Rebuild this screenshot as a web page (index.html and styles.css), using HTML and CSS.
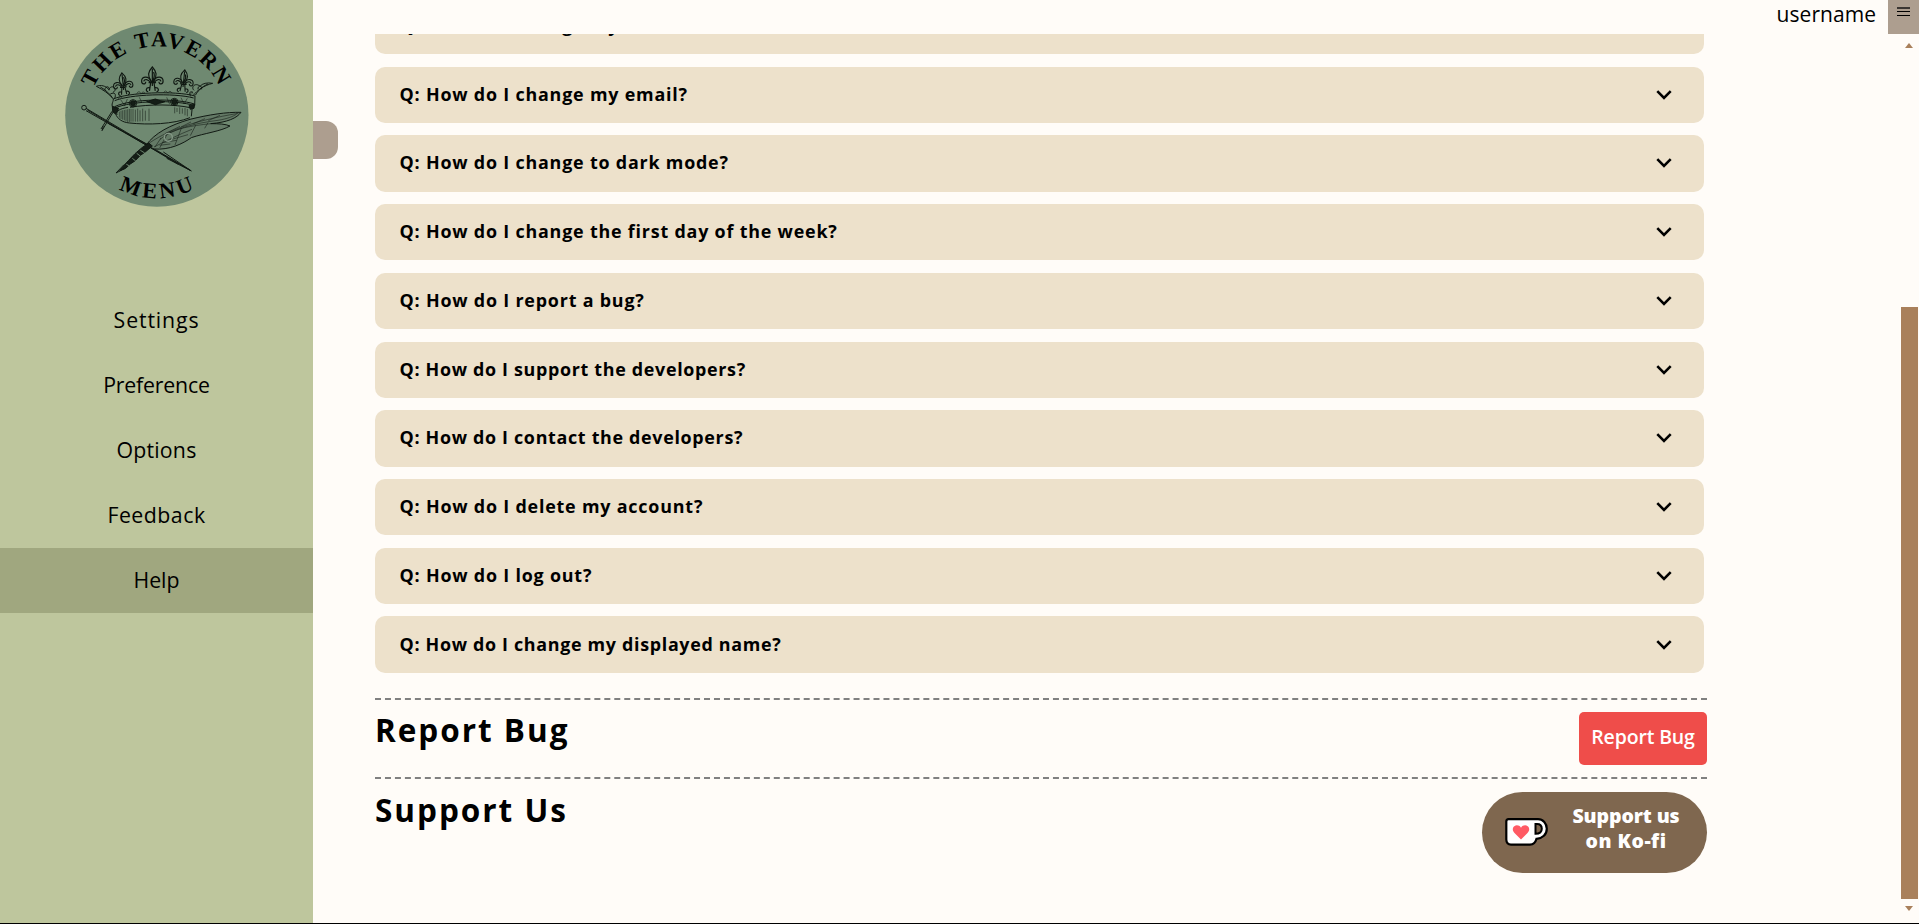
FILE: index.html
```html
<!DOCTYPE html>
<html lang="en">
<head>
<meta charset="utf-8">
<title>The Tavern Menu - Help</title>
<link rel="stylesheet" href="styles.css">
</head>
<body>
<svg width="0" height="0" class="defs">
  <defs>
    <symbol id="chevron" viewBox="0 0 16 10"><path d="M1.300 1.200 8 7.900l6.700-6.700" fill="none" stroke="#000" stroke-width="2.600"/></symbol>
    <g id="fleur">
      <path d="M0 -46C-11 -34 -12 -25 -3 -11H3C12 -25 11 -34 0 -46Z"/>
      <path d="M0 -42V0M3 -34C6 -27 5 -20 1 -13" />
      <path d="M-3 -11C-8 -25 -26 -25 -26 -12C-26 -3 -16 -3 -16 -10M-5 -9C-10 -17 -19 -18 -21 -11M3 -11C8 -25 26 -25 26 -12C26 -3 16 -3 16 -10M5 -9C10 -17 19 -18 21 -11"/>
      <path d="M-9 -8H9M-4 -8L-7 12M4 -8L7 12M-7 4C-16 3 -17 13 -10 14M7 4C16 3 17 13 10 14"/>
    </g>
  </defs>
</svg>
<div class="app">
  <aside class="sidebar">
    <svg class="logo" viewBox="45 38 551 553">
      <defs>
        <path id="arc-top" d="M130.400 233.500A206 206 0 0 1 512 240"/>
        <path id="arc-bottom" d="M206 536A249 249 0 0 0 445 530"/>
      </defs>
      <circle cx="320.500" cy="314.500" r="275" fill="#6f8971"/>
      <text class="logo-text"><textPath href="#arc-top" textLength="474" lengthAdjust="spacing">THE TAVERN</textPath></text>
      <text class="logo-text"><textPath href="#arc-bottom" textLength="236" lengthAdjust="spacing">MENU</textPath></text>
      <g class="ink">
        <use href="#fleur" transform="translate(307 227) scale(1.240)"/>
        <use href="#fleur" transform="translate(221 239) rotate(-6) scale(1.120)"/>
        <use href="#fleur" transform="translate(399 230) rotate(6) scale(1.120)"/>
        <path d="M190 266C176 249 160 239 139 228C153 223 167 226 176 238C187 218 205 238 189 246M151 230C169 240 180 252 187 262M164 240C166 224 181 228 177 240M181 251C195 244 199 252 194 264"/>
        <path d="M430 255C442 240 460 226 488 219C472 216 457 219 450 228C437 215 421 230 432 240M474 221C454 230 443 243 436 255M455 237C456 223 443 225 444 237M429 246C418 241 417 250 422 258"/>
        <path d="M190 266C230 247 375 240 435 257L434 286C380 268 245 270 192 294C180 285 190 277 190 266Z"/>
        <path d="M194 271C240 252 370 247 431 263M194 289C245 264 382 264 433 281" stroke-width="3"/>
        <path d="M193 294C188 303 190 309 197 311C202 325 216 336 238 338C295 344 370 342 420 322M201 314C197 302 210 295 234 291M240 291C300 281 376 282 420 292M427 288L424 318"/>
        <path class="fine" d="M208 304v18M213 301v25M218 300v28M223 299v31M228 298v35M233 297v38M238 296v39M243 296v38M249 296v38M256 298v36M263 295v39M270 300v33M278 295v38M286 301v30M297 295v37M374 291v18M381 293v12M389 291v20M397 294v16M405 293v22M412 296v22"/>
        <ellipse class="solid" cx="249" cy="279" rx="7" ry="8"/>
        <ellipse class="solid" cx="373" cy="275" rx="7" ry="8"/>
        <circle cx="249" cy="279" r="11"/><circle cx="373" cy="275" r="11"/>
        <path class="solid" d="M290 274L303 270L316 266L330 271L345 274L329 279L316 283L302 278Z"/>
        <path class="solid" d="M187 288L206 294L198 310L188 304ZM417 286L434 282L432 294L421 297Z"/>
        <path class="fine" d="M212 268L224 286L232 266M268 261L276 278M350 261L359 282M393 262L402 281L412 264"/>
        <path class="fine" d="M204 266q6 -12 12 -3M260 250q7 -12 13 0q7 -10 13 0M340 248q7 -12 13 0q7 -10 13 0M420 253q5 -11 10 -4"/>
      </g>
      <g class="ink">
        <circle cx="102" cy="292" r="7"/>
        <path d="M108 294L421 480L108 301M112 299L385 462M190 304L156 361L160 348M186 303L153 356"/>
        <path d="M174 339L292 402M340 425L424 482L350 444"/>
      </g>
      <g class="ink">
        <path class="feather" d="M288 405C314 368 361 344 420 327C477 313 529 305 573 306C561 323 533 336 482 340C507 340 526 341 540 347C513 363 462 369 424 382C399 400 358 420 312 416Z"/>
        <path class="fine" d="M288 405C350 360 430 332 565 309M330 387C370 354 440 338 504 330C530 326 551 318 560 311M345 375C380 354 420 347 482 340M312 410C350 391 390 371 426 357"/>
        <path class="fine" d="M333 383L315 410M350 374L329 413M394 354L375 404M437 345L421 376M474 337L464 354M390 348L345 370M423 335L393 350M465 325L430 340M510 315L475 331M338 397L380 390M329 405L361 401M359 389L414 373"/>
        <circle cx="355" cy="381" r="12" stroke="#859987" stroke-width="4"/>
        <path class="solid" d="M296 398L276 412L255 430L236 450L223 464L209 481L227 474L241 461L256 451L270 436L287 424L307 407Z"/>
        <path d="M222 463L198 488L226 474"/>
        <path d="M247 444L257 452M260 429L272 438M271 420L284 428M229 462L237 466" stroke="#6f8971"/>
      </g>
    </svg>
    <nav class="nav">
      <a class="nav-item settings">Settings</a>
      <a class="nav-item preference">Preference</a>
      <a class="nav-item options">Options</a>
      <a class="nav-item feedback">Feedback</a>
      <a class="nav-item help active">Help</a>
    </nav>
    <div class="drawer-handle"></div>
  </aside>
  <div class="page">
    <header class="topbar">
      <span class="username">username</span>
      <button class="menu-button" aria-label="Menu">
        <svg width="13" height="10" viewBox="0 0 13 10"><path d="M0 1h13" stroke="#3b3632" stroke-width="2"/><path d="M0 4.500h13M0 8.500h13" stroke="#000" stroke-width="1.200"/></svg>
      </button>
    </header>
    <div class="scroll-area">
      <main class="content">
        <div class="faq">
          <div class="question"><span>Q: How do I change my username?</span><svg class="chevron"><use href="#chevron"/></svg></div>
          <div class="question"><span>Q: How do I change my email?</span><svg class="chevron"><use href="#chevron"/></svg></div>
          <div class="question"><span>Q: How do I change to dark mode?</span><svg class="chevron"><use href="#chevron"/></svg></div>
          <div class="question"><span>Q: How do I change the first day of the week?</span><svg class="chevron"><use href="#chevron"/></svg></div>
          <div class="question"><span>Q: How do I report a bug?</span><svg class="chevron"><use href="#chevron"/></svg></div>
          <div class="question tight"><span>Q: How do I support the developers?</span><svg class="chevron"><use href="#chevron"/></svg></div>
          <div class="question tight"><span>Q: How do I contact the developers?</span><svg class="chevron"><use href="#chevron"/></svg></div>
          <div class="question"><span>Q: How do I delete my account?</span><svg class="chevron"><use href="#chevron"/></svg></div>
          <div class="question"><span>Q: How do I log out?</span><svg class="chevron"><use href="#chevron"/></svg></div>
          <div class="question tight"><span>Q: How do I change my displayed name?</span><svg class="chevron"><use href="#chevron"/></svg></div>
        </div>
        <section class="row report">
          <h2>Report Bug</h2>
          <button class="report-button">Report Bug</button>
        </section>
        <section class="row support">
          <h2>Support Us</h2>
          <a class="kofi">
            <svg class="cup" viewBox="0 0 43 28">
              <path d="M3.500 1.200H33C38 1.200 41.800 5.500 41.800 10.800C41.800 16.500 37.500 20.500 31.500 20.800C30.500 24.500 28.500 26.600 25 26.600H6C3 26.600 1.300 24.500 1.300 21.500V3.500C1.300 2 2 1.200 3.500 1.200Z" fill="#fff" stroke="#000" stroke-width="2.200"/>
              <path d="M30.500 6H32C35 6 36.800 8 36.800 10.800C36.800 14 34.500 15.800 30.500 15.800Z" fill="#7f674f" stroke="#000" stroke-width="2"/>
              <path d="M16 21.500L9.500 15C7 12.500 7.500 9.500 9.300 8.200C11.500 6.600 14.500 7.300 16 9.700C17.500 7.300 20.500 6.600 22.700 8.200C24.500 9.500 25 12.500 22.500 15Z" fill="#ff5a64"/>
            </svg>
            <span class="kofi-label"><span class="kofi-top">Support us</span><br><span class="kofi-bottom">on Ko-fi</span></span>
          </a>
        </section>
      </main>
      <div class="scrollbar">
        <div class="arrow up"></div>
        <div class="track"><div class="thumb"></div></div>
        <div class="arrow down"></div>
      </div>
    </div>
  </div>
</div>
</body>
</html>
```
FILE: styles.css
```css
* { box-sizing: border-box; }
body {
  margin: 0;
  height: 924px;
  overflow: hidden;
  background: #fffcf8;
  color: #000;
  font-family: "Open Sans", sans-serif;
}
.defs { position: absolute; }
button { border: 0; padding: 0; font-family: inherit; }

.app { display: flex; height: 924px; border-bottom: 1px solid #000; }

.sidebar {
  position: relative;
  width: 313px;
  flex: none;
  background: #bec69d;
  padding-top: 22.500px;
}
.logo { display: block; width: 183.700px; height: 184.300px; margin-left: 65px; }
.logo-text { font: bold 66px "Liberation Serif", serif; fill: #000; }
.ink { fill: none; stroke: #0f1711; stroke-width: 2.900; }
.fine { stroke-width: 1.600; }
.solid { fill: #141d16; }
.feather { fill: #647a66; }
.drawer-handle {
  position: absolute;
  left: 313px;
  top: 121px;
  width: 25px;
  height: 38px;
  border-radius: 0 12px 12px 0;
  background: #ad9e8f;
}
.nav { margin-top: 81.200px; display: flex; flex-direction: column; }
.nav-item {
  height: 65px;
  padding-bottom: 2px;
  display: flex;
  align-items: center;
  justify-content: center;
  font-size: 21.300px;
  font-weight: 500;
}
.settings { letter-spacing: .850px; }
.preference { letter-spacing: -.200px; }
.options { letter-spacing: .200px; }
.feedback { letter-spacing: .500px; }
.help { letter-spacing: 0; }
.active { background: #a0a77f; }

.page { flex: 1; display: flex; flex-direction: column; }
.topbar { height: 34px; display: flex; justify-content: flex-end; }
.username { font-size: 21px; font-weight: 500; line-height: 28px; letter-spacing: .050px; margin-right: 12px; }
.menu-button { width: 31px; height: 34px; background: #ad9e8f; display: flex; justify-content: center; padding: 7px 1px 0 0; }

.scroll-area { flex: 1; min-height: 0; display: flex; justify-content: space-between; overflow: hidden; }
.content { width: 1332px; margin-left: 62px; }
.faq {
  display: flex;
  flex-direction: column;
  gap: 12.450px;
  width: 1329px;
  margin-top: -36.150px;
  margin-bottom: 25.100px;
}
.question {
  height: 56.300px;
  padding: 0 32px 2px 24.500px;
  border-radius: 10px;
  background: #ede1cb;
  display: flex;
  align-items: center;
  justify-content: space-between;
  font-size: 17.900px;
  font-weight: 700;
  letter-spacing: .800px;
}
.tight { letter-spacing: .680px; }
.chevron { width: 16px; height: 10px; margin-top: 2px; }

.row { display: flex; justify-content: space-between; align-items: flex-start; border-top: 2px dashed #808080; }
.report { padding-top: 12px; height: 79px; }
.support { padding-top: 13px; }
h2 { margin: 0; padding-top: 1px; font-size: 31.500px; line-height: 34.600px; font-weight: 700; letter-spacing: 1.980px; }
.report-button {
  width: 128px;
  height: 53px;
  padding-bottom: 3px;
  border-radius: 5px;
  background: #ef4d4a;
  color: #fff;
  font-size: 19.500px;
  font-weight: 600;
  letter-spacing: -.150px;
}
.kofi {
  width: 225px;
  height: 81px;
  border-radius: 41px;
  background: #7f674f;
  color: #fff;
  display: flex;
  align-items: center;
  padding-left: 23px;
  gap: 23px;
}
.cup { width: 43px; height: 28px; }
.kofi-label { width: 110px; padding-bottom: 9px; text-align: center; font-size: 19.500px; font-weight: 800; line-height: 25px; white-space: nowrap; }
.kofi-top { letter-spacing: -.100px; }
.kofi-bottom { letter-spacing: .500px; }

.scrollbar { width: 18px; padding-right: 1px; display: flex; flex-direction: column; align-items: center; }
.track { flex: 1; width: 17px; padding-top: 249px; margin-top: 10px; display: flex; }
.thumb { width: 17px; background: #a9805b; }
.arrow { width: 0; height: 0; border: 0 solid transparent; border-width: 0 4.500px; margin-right: 1px; }
.up { margin-top: 9px; border-bottom: 5px solid #a9805b; }
.down { margin-top: 7px; margin-bottom: 12px; border-top: 5px solid #a9805b; }
```
